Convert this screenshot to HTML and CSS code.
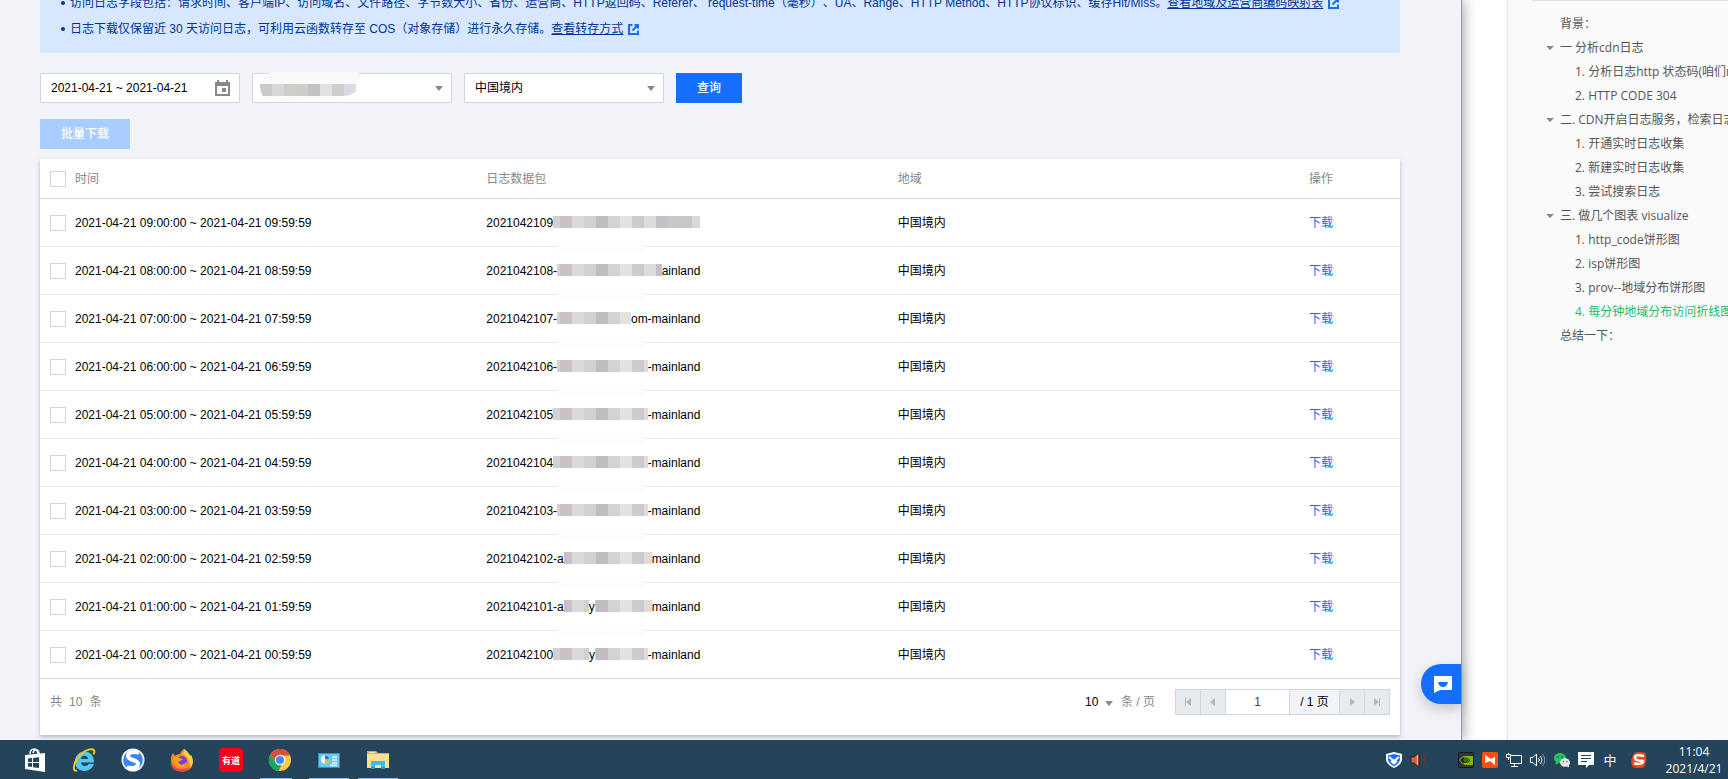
FILE: index.html
```
<!DOCTYPE html>
<html lang="zh-CN">
<head>
    <meta charset="UTF-8">
    <meta name="viewport" content="width=device-width, initial-scale=1.0">
    <title>日志下载</title>
    <link rel="stylesheet" href="styles.css">
</head>
<body>
    <div class="desktop">
        <main class="console">
            <div class="notice">
                <ul>
                    <li>访问日志字段包括：请求时间、客户端IP、访问域名、文件路径、字节数大小、省份、运营商、HTTP返回码、Referer、 request-time（毫秒）、UA、Range、HTTP Method、HTTP协议标识、缓存Hit/Miss。<a href="#">查看地域及运营商编码映射表</a><svg class="ext" viewBox="0 0 11 11"><path d="M4.5 1H1v9h9V6.500M6.500 1H10v3.500M10 1L4.500 6.500"/></svg></li>
                    <li>日志下载仅保留近 30 天访问日志，可利用云函数转存至 COS（对象存储）进行永久存储。<a href="#">查看转存方式</a><svg class="ext" viewBox="0 0 11 11"><path d="M4.5 1H1v9h9V6.500M6.500 1H10v3.500M10 1L4.500 6.500"/></svg></li>
                </ul>
            </div>

            <form class="filters">
                <div class="field date">
                    <input type="text" value="2021-04-21 ~ 2021-04-21" aria-label="日期">
                    <svg viewBox="0 0 15 16"><path fill-rule="evenodd" d="M2 0h2v2h7V0h2v2h2v14H0V2h2zM2 6v8h11V6zM7 8h4v4H7z"/></svg>
                </div>
                <div class="field select">
                    <select aria-label="域名"><option></option></select>
                    <!-- masked domain -->
                    <svg class="mask" viewBox="0 0 100 30">
                        <path fill="#fafafb" d="M9 1Q14 0 20 0H98Q100 4 99 13H1Q3 5 9 1zM1 22H98Q90 25 60 26Q42 28 32 29Q8 32 1 22z"/>
                        <path fill="#ccc9c7" d="M0 12h12v12H3Q0 20 0 12z"/>
                        <path fill="#d7d7d9" d="M12 12h12v12H12z"/>
                        <path fill="#d0cdc9" d="M24 12h12v12H24z"/>
                        <path fill="#cccdcb" d="M36 12h12v12H36z"/>
                        <path fill="#c3c2c3" d="M48 12h12v12H48z"/>
                        <path fill="#e3e2e3" d="M60 12h12v12H60z"/>
                        <path fill="#d0cdcf" d="M72 12h12v12H72z"/>
                        <path fill="#d8dce2" d="M84 12h12v8Q91 23 84 24z"/>
                    </svg>
                </div>
                <div class="field select">
                    <select aria-label="地域"><option>中国境内</option></select>
                </div>
                <button type="button" class="btn">查询</button>
            </form>

            <button type="button" class="btn btn-disabled" disabled>批量下载</button>

            <section class="card">
                <table class="logs">
                    <thead>
                        <tr>
                            <th class="check"><input type="checkbox" aria-label="全选"></th>
                            <th>时间</th>
                            <th>日志数据包</th>
                            <th>地域</th>
                            <th class="action">操作</th>
                        </tr>
                    </thead>
                    <tbody>
                        <tr>
                            <td class="check"><input type="checkbox" aria-label="选择 09"></td>
                            <td>2021-04-21 09:00:00 ~ 2021-04-21 09:59:59</td>
                            <td class="package"><div><span>2021042109</span></div></td>
                            <td>中国境内</td>
                            <td><a href="#">下载</a></td>
                        </tr>
                        <tr>
                            <td class="check"><input type="checkbox" aria-label="选择 08"></td>
                            <td>2021-04-21 08:00:00 ~ 2021-04-21 08:59:59</td>
                            <td class="package"><div><span>2021042108-</span><span class="tail">ainland</span></div></td>
                            <td>中国境内</td>
                            <td><a href="#">下载</a></td>
                        </tr>
                        <tr>
                            <td class="check"><input type="checkbox" aria-label="选择 07"></td>
                            <td>2021-04-21 07:00:00 ~ 2021-04-21 07:59:59</td>
                            <td class="package"><div><span>2021042107-</span><span class="tail">om-mainland</span></div></td>
                            <td>中国境内</td>
                            <td><a href="#">下载</a></td>
                        </tr>
                        <tr>
                            <td class="check"><input type="checkbox" aria-label="选择 06"></td>
                            <td>2021-04-21 06:00:00 ~ 2021-04-21 06:59:59</td>
                            <td class="package"><div><span>2021042106-</span><span class="tail">-mainland</span></div></td>
                            <td>中国境内</td>
                            <td><a href="#">下载</a></td>
                        </tr>
                        <tr>
                            <td class="check"><input type="checkbox" aria-label="选择 05"></td>
                            <td>2021-04-21 05:00:00 ~ 2021-04-21 05:59:59</td>
                            <td class="package"><div><span>2021042105</span><span class="tail">-mainland</span></div></td>
                            <td>中国境内</td>
                            <td><a href="#">下载</a></td>
                        </tr>
                        <tr>
                            <td class="check"><input type="checkbox" aria-label="选择 04"></td>
                            <td>2021-04-21 04:00:00 ~ 2021-04-21 04:59:59</td>
                            <td class="package"><div><span>2021042104</span><span class="tail">-mainland</span></div></td>
                            <td>中国境内</td>
                            <td><a href="#">下载</a></td>
                        </tr>
                        <tr>
                            <td class="check"><input type="checkbox" aria-label="选择 03"></td>
                            <td>2021-04-21 03:00:00 ~ 2021-04-21 03:59:59</td>
                            <td class="package"><div><span>2021042103-</span><span class="tail">-mainland</span></div></td>
                            <td>中国境内</td>
                            <td><a href="#">下载</a></td>
                        </tr>
                        <tr>
                            <td class="check"><input type="checkbox" aria-label="选择 02"></td>
                            <td>2021-04-21 02:00:00 ~ 2021-04-21 02:59:59</td>
                            <td class="package"><div><span>2021042102-a</span><span class="tail">mainland</span></div></td>
                            <td>中国境内</td>
                            <td><a href="#">下载</a></td>
                        </tr>
                        <tr>
                            <td class="check"><input type="checkbox" aria-label="选择 01"></td>
                            <td>2021-04-21 01:00:00 ~ 2021-04-21 01:59:59</td>
                            <td class="package"><div><span>2021042101-a</span><span class="letter">y</span><span class="tail">mainland</span></div></td>
                            <td>中国境内</td>
                            <td><a href="#">下载</a></td>
                        </tr>
                        <tr>
                            <td class="check"><input type="checkbox" aria-label="选择 00"></td>
                            <td>2021-04-21 00:00:00 ~ 2021-04-21 00:59:59</td>
                            <td class="package"><div><span>2021042100</span><span class="letter far">y</span><span class="tail">-mainland</span></div></td>
                            <td>中国境内</td>
                            <td><a href="#">下载</a></td>
                        </tr>
                    </tbody>
                </table>
                <footer class="card-footer">
                    <div class="total"><span>共</span><span>10</span><span>条</span></div>
                    <div class="page-size">
                        <div class="size-select"><select aria-label="每页条数"><option>10</option></select></div>
                        <span>条 / 页</span>
                    </div>
                    <div class="pager">
                        <button type="button" aria-label="首页"><svg viewBox="0 0 8 8"><path d="M1 0h1v8H1zM7 0v8L2 4z"/></svg></button>
                        <button type="button" aria-label="上一页"><svg viewBox="0 0 8 8"><path d="M6 0v8L1 4z"/></svg></button>
                        <input type="text" value="1" aria-label="页码">
                        <span>/ 1 页</span>
                        <button type="button" aria-label="下一页"><svg viewBox="0 0 8 8"><path d="M2 0v8l5-4z"/></svg></button>
                        <button type="button" aria-label="末页"><svg viewBox="0 0 8 8"><path d="M6 0h1v8H6zM1 0v8l5-4z"/></svg></button>
                    </div>
                </footer>
            </section>

            <button type="button" class="chat" aria-label="在线咨询">
                <svg viewBox="0 0 18 17"><path fill="#fff" d="M0 0h18v14H6l-6 3z"/><path fill="#146eff" d="M4 6h10q-1 5-5 5T4 6z"/></svg>
            </button>
        </main>

        <aside class="outline">
            <nav>
                <ul>
                    <li><a href="#">背景：</a></li>
                    <li class="open"><a href="#">一 分析cdn日志</a></li>
                    <li class="sub"><a href="#">1. 分析日志http 状态码(咱们nginx)</a></li>
                    <li class="sub"><a href="#">2. HTTP CODE 304</a></li>
                    <li class="open"><a href="#">二. CDN开启日志服务，检索日志</a></li>
                    <li class="sub"><a href="#">1. 开通实时日志收集</a></li>
                    <li class="sub"><a href="#">2. 新建实时日志收集</a></li>
                    <li class="sub"><a href="#">3. 尝试搜索日志</a></li>
                    <li class="open"><a href="#">三. 做几个图表 visualize</a></li>
                    <li class="sub"><a href="#">1. http_code饼形图</a></li>
                    <li class="sub"><a href="#">2. isp饼形图</a></li>
                    <li class="sub"><a href="#">3. prov--地域分布饼形图</a></li>
                    <li class="sub active"><a href="#">4. 每分钟地域分布访问折线图</a></li>
                    <li><a href="#">总结一下：</a></li>
                </ul>
            </nav>
        </aside>
    </div>

    <div class="taskbar">
        <div class="apps">
            <button type="button" aria-label="应用商店">
                <svg viewBox="0 0 24 24"><path fill="none" stroke="#fff" stroke-width="1.500" d="M7 6c0-6 7-7 8 0M10 5c1-5 6-4 6 1"/><path fill="#fff" d="M2 7l20-2v19L2 21z"/><path fill="#24445c" d="M5 10.500l4-.5v4H5zM10 10l6-.7V14h-6zM5 15h4v4l-4-.5zM10 15h6v5l-6-.8z"/></svg>
            </button>
            <button type="button" aria-label="Internet Explorer">
                <svg viewBox="0 0 24 24"><path fill="#52c8f2" d="M12.500 3.500C18.500 3.500 22 8 22 14.500H9c.3 2.500 2 3.500 4 3.500 1.700 0 3-.7 3.600-2H22c-1.400 4-4.600 7-9.500 7C6.500 23 3 19 3 13.500s4-10 9.500-10zM9 11h7c-.2-2-1.500-3.200-3.500-3.200S9.400 9 9 11z"/><path fill="none" stroke="#f6c620" stroke-width="2" d="M5 22.500c-4 1-4-4-1-10C7.500 5.500 16 0 21 1.500c2 .8 1.500 3 .5 5"/></svg>
            </button>
            <button type="button" aria-label="搜狗浏览器">
                <svg viewBox="0 0 24 24"><circle cx="12" cy="12" r="11.500" fill="#f4f8fc"/><circle cx="12" cy="12" r="9.800" fill="#3b87e8"/><path fill="none" stroke="#fff" stroke-width="4" d="M18 5C13 3 7 4 7 8c0 5 10 3 10 8 0 4-6 5-11 3"/></svg>
            </button>
            <button type="button" aria-label="Firefox">
                <svg viewBox="0 0 24 24"><path fill="#ff8a1f" d="M14 1c3 2 5 4 6 7l1-1c4 8 1 16-8 16.500C5 24 0 19 1 12c0-4 1-5 2-7l2 3c1-1 3-2 5-2 1-2 2-4 4-5z"/><path fill="#ffd23c" d="M14 1c3 2 5 4 6 7l1-1c3 6 2 10-1 13 0-7-2-11-7-14z"/><path fill="#ff3d58" d="M1 13c2 5 5 8 11 8 4 0 7-1 8-4-1 5-5 7-8 6.500C5 23 1 19 1 13z"/><circle cx="12" cy="13" r="5" fill="#7b3fd6"/><path fill="#ff9d22" d="M4 9c3-1 4 1 9 2-2 1-2 2-5 3 2 4 6 3 8 0 0 4-3 6-6 5-4-1-6-5-6-10z"/></svg>
            </button>
            <button type="button" aria-label="有道词典">
                <svg viewBox="0 0 24 24"><rect width="24" height="24" rx="4" fill="#fa0019"/><text class="youdao" x="12" y="16" text-anchor="middle">有道</text></svg>
            </button>
            <button type="button" class="running multi" aria-label="Chrome">
                <svg viewBox="0 0 24 24"><circle cx="12" cy="12" r="11" fill="#ffcd41"/><path fill="#dd4b3e" d="M2.500 6.500C7-1 18-1 22 7.500H12L7.500 14z"/><path fill="#1da362" d="M2.500 6.500L8 14.500l6 1.500-3.500 7C3 22-2 14 2.500 6.500z"/><circle cx="12" cy="12" r="5.200" fill="#fff"/><circle cx="12" cy="12" r="4.100" fill="#4587f3"/></svg>
            </button>
            <button type="button" class="running" aria-label="控制面板">
                <svg viewBox="0 0 24 24"><path fill="#2e92c8" d="M1 5h22v15H1z"/><path fill="#67c9f4" d="M2 6h20v13H2z"/><circle cx="8" cy="11.500" r="4" fill="#f3fbff"/><path fill="#2679b8" d="M8 11.500v-4a4 4 0 0 1 4 4z"/><path fill="#efb13c" d="M8 11.500h4a4 4 0 0 1-4 4zM4 17h7v1H4z"/><path fill="none" stroke="#e9f8ff" stroke-width="1.500" d="M15 9h5M15 12h5M15 15h5M13 17.500h7"/></svg>
            </button>
            <button type="button" class="running" aria-label="文件资源管理器">
                <svg viewBox="0 0 24 24"><path fill="#e2ae43" d="M1 3h9l2 2h11v15H1z"/><path fill="#fbe18d" d="M1 6h22v14H1z"/><path fill="#fff3c0" d="M3 4h6v1H3z"/><path fill="#38bdf0" d="M5 13h14v8h-4v-4H9v4H5z"/><path fill="#1a93cf" d="M5 19h4v2H5zM15 19h4v2h-4z"/></svg>
            </button>
        </div>
        <div class="tray">
            <div class="tray-group">
                <svg viewBox="0 0 16 16"><path fill="#fff" d="M8 0l8 2v6q-1 5-8 8Q1 13 0 8V2z"/><path fill="#1a6dff" d="M8 2l6 1.500V8q-1 4-6 6.500Q3 12 2 8V3.500z"/><path fill="none" stroke="#fff" stroke-width="2" d="M3 5l5 4 5-4M5 9l3 2.500L11 9"/></svg>
                <svg viewBox="0 0 16 16"><path fill="#d9623f" stroke="#221815" stroke-width=".8" d="M1 5h3l5-4v14l-5-4H1z"/><path fill="#f5cdbb" d="M7 4l1-1v10l-1-1z"/><path fill="none" stroke="#733529" stroke-width="1.200" d="M11 5q2 3 0 6M13.500 3q3 5 0 10"/></svg>
            </div>
            <div class="tray-group">
                <svg viewBox="0 0 16 16"><rect x=".5" y=".5" width="15" height="15" rx="1" fill="#30353d" stroke="#17191d"/><path fill="#76b900" d="M6 4h9v9H6z"/><path fill="none" stroke="#76b900" d="M1.500 8Q5 3 8 5M1.500 8Q4 13 8 12"/><path fill="none" stroke="#23301b" d="M3 8.500q4-5 9 0-5 4-9 0zM5 8.500q3-2 5 0-3 2-5 0z"/></svg>
                <svg viewBox="0 0 16 16"><rect width="16" height="16" rx="2" fill="#f8500f"/><path fill="#fff" d="M3 3l6 4 4-2v8L8 9l-5 2z"/></svg>
                <svg viewBox="0 0 16 16"><path fill="none" stroke="#fff" d="M5 3.500h10.500v8H4.500V6M8.500 12v2.500M5 14.500h7M.5 2.500h4v3h-4zM2.500 1v1M2.500 6v2"/></svg>
                <svg viewBox="0 0 16 16"><path fill="none" stroke="#fff" d="M.5 5.500H3L6.500 2v12L3 10.500H.5zM8.500 6q1.500 2 0 4M10.500 4q3 4 0 8"/><path fill="none" stroke="#8ba0af" d="M12.500 2q4.500 6 0 12"/></svg>
                <svg viewBox="0 0 16 16"><ellipse cx="6" cy="6" rx="6" ry="5" fill="#26c45f"/><path fill="#26c45f" d="M2 9l-.5 4L5 11z"/><circle cx="4" cy="5" r=".8" fill="#164a2b"/><circle cx="8" cy="5" r=".8" fill="#164a2b"/><ellipse cx="11" cy="10.500" rx="5" ry="4.300" fill="#e4e8e9"/><path fill="#e4e8e9" d="M12 14l3 1.500V12z"/><circle cx="9.500" cy="9.500" r=".7" fill="#555"/><circle cx="13" cy="9.500" r=".7" fill="#555"/></svg>
                <svg viewBox="0 0 16 16"><path fill="#fff" d="M0 0h16v13h-5l-3 3v-3H0z"/><path fill="none" stroke="#24445c" d="M3 3.500h10M3 6.500h10M3 9.500h6"/></svg>
                <span class="ime">中</span>
            </div>
            <svg viewBox="0 0 16 16"><path fill="#f2461c" d="M3 1q6-2 11 0 2 4 1 9l-2 5q-6 2-11 0-3-5-1-9z"/><path fill="none" stroke="#fff" stroke-width="2.500" d="M13 4Q4 2 4 5.500T12 9q0 4-9 2.500"/></svg>
            <div class="clock"><span>11:04</span><span>2021/4/21</span></div>
        </div>
    </div>
</body>
</html>
```

FILE: styles.css
```
* {
    box-sizing: border-box;
}
body {
    margin: 0;
    height: 100vh;
    display: flex;
    flex-direction: column;
    overflow: hidden;
    background: #fff;
    color: #000;
    font: 12px/18px "Liberation Sans", "Noto Sans CJK SC", sans-serif;
}
ul {
    list-style: none;
    margin: 0;
    padding: 0;
}
button, input, select {
    font: inherit;
    color: inherit;
    margin: 0;
    border-radius: 0;
}
button {
    border: 0;
    padding: 0;
    cursor: pointer;
}
select {
    appearance: none;
}
svg {
    display: block;
    flex: none;
}

/* windows */
.desktop {
    flex: 1;
    min-height: 0;
    display: flex;
    gap: 45px;
}
.console {
    position: relative;
    z-index: 1;
    flex: 1;
    min-width: 0;
    padding: 0 61px 0 40px;
    background: #f2f3f8;
    border-right: 1px solid #999;
    box-shadow: 2px 0 12px rgba(0,0,0,0.35);
}

/* notice */
.notice {
    height: 53px;
    padding: 0 20px 15px;
    display: flex;
    flex-direction: column;
    justify-content: flex-end;
    overflow: hidden;
    background: #d6e7ff;
    color: #003399;
    text-spacing-trim: space-all;
}
.notice ul {
    display: flex;
    flex-direction: column;
    gap: 8px;
}
.notice li {
    position: relative;
    padding-left: 10px;
    white-space: nowrap;
}
.notice li::before {
    content: "";
    position: absolute;
    left: 1px;
    top: 7px;
    width: 4px;
    height: 4px;
    border-radius: 50%;
    background: #003399;
}
.notice a {
    color: #003399;
    text-decoration: underline;
}
.ext {
    display: inline-block;
    width: 11px;
    height: 11px;
    margin-left: 5px;
    vertical-align: -2px;
    fill: none;
    stroke: #146eff;
    stroke-width: 2;
}

/* filters */
.filters {
    display: flex;
    gap: 12px;
    margin: 20px 0 16px;
}
.field {
    position: relative;
    width: 200px;
    height: 30px;
}
.field input, .field select {
    width: 100%;
    height: 100%;
    padding: 0 10px;
    background: #fff;
    border: 1px solid #cfd5de;
}
.field.date svg {
    position: absolute;
    right: 10px;
    top: 7px;
    width: 15px;
    height: 16px;
    fill: #888;
}
.field.select::after, .size-select::after {
    content: "";
    position: absolute;
    right: 9px;
    top: 13px;
    border: 4px solid transparent;
    border-top: 5px solid #888;
    border-bottom: 0;
}
.field .mask {
    position: absolute;
    left: 8px;
    top: -1px;
    width: 100px;
    height: 30px;
}
.btn {
    height: 30px;
    padding: 0 21px;
    background: #146eff;
    color: #fff;
    font-weight: 500;
}
.btn:hover {
    background: #0057e0;
}
.btn-disabled, .btn-disabled:hover {
    display: block;
    background: #a8cdff;
    cursor: default;
}

/* table */
.card {
    margin-top: 10px;
    background: #fff;
    box-shadow: 0 2px 4px rgba(54,58,80,0.32);
}
.logs {
    width: 100%;
    table-layout: fixed;
    border-collapse: separate;
    border-spacing: 0;
}
.logs th, .logs td {
    height: 48px;
    padding: 0;
    text-align: left;
    border-bottom: 1px solid #e5e8ed;
}
.logs th {
    height: 40px;
    color: #888;
    font-weight: normal;
    border-color: #cfd5de;
}
.logs tr:last-child td {
    border-color: #cfd5de;
}
.logs .check {
    width: 35px;
    padding-left: 10px;
}
.logs .action {
    width: 91px;
}
.logs input {
    display: block;
    appearance: none;
    width: 16px;
    height: 16px;
    background: #fff;
    border: 1px solid #cfd5de;
}
.logs a {
    color: #146eff;
    text-decoration: none;
}
/* masked part of the package name shows through between the text spans */
.package {
    position: relative;
}
.package div {
    display: flex;
    width: 214px;
    background: linear-gradient(90deg,
        #d0d2d3 74px, #c8c2c8 74px 86px, #dad8db 86px 98px, #ced2d3 98px 110px,
        #c2bbc2 110px 122px, #d3d3d1 122px 134px, #e3e2dd 134px 146px,
        #c9cbcd 146px 158px, #dedbd8 158px 170px, #c4c0c8 170px 182px,
        #c9c6c7 182px 206px, #d5d9dc 206px) no-repeat 0 2px / 100% 12px;
}
.package span {
    background: #fff;
}
.package .tail {
    margin-left: auto;
}
.package .letter {
    margin-left: 25px;
}
.package .letter.far {
    margin-left: 36px;
}
.package::after {
    content: "";
    position: absolute;
    left: 72px;
    bottom: -7px;
    width: 86px;
    height: 12px;
    background: #fdfdfd;
}
.logs tr:last-child .package::after {
    display: none;
}

/* table footer */
.card-footer {
    display: flex;
    align-items: center;
    padding: 10px 10px 20px;
    color: #888;
}
.total {
    flex: 1;
    display: flex;
    gap: 7px;
}
.page-size {
    display: flex;
    gap: 8px;
    margin-right: 20px;
}
.size-select {
    position: relative;
}
.size-select select {
    width: 28px;
    padding: 0;
    border: 0;
    background: none;
    color: #000;
}
.size-select::after {
    right: 0;
    top: 8px;
}
.pager {
    display: flex;
    height: 26px;
    border: 1px solid #cfd5de;
}
.pager > * + * {
    border: 0;
    border-left: 1px solid #cfd5de;
}
.pager button {
    display: flex;
    align-items: center;
    justify-content: center;
    width: 25px;
    background: #e7eaef;
}
.pager button:first-child {
    width: 24px;
}
.pager svg {
    width: 8px;
    height: 8px;
    fill: #b4b7bd;
}
.pager input {
    width: 64px;
    padding: 0;
    text-align: center;
    background: #fff;
    color: #444;
}
.pager span {
    width: 50px;
    line-height: 24px;
    text-align: center;
    background: #f2f3f8;
    color: #000;
}

.chat {
    position: absolute;
    right: 0;
    bottom: 36px;
    width: 40px;
    height: 40px;
    padding-left: 13px;
    border-radius: 20px 0 0 20px;
    background: #146eff;
    box-shadow: 0 5px 12px rgba(54,58,80,0.25);
}
.chat svg {
    width: 18px;
    height: 17px;
}

/* article outline */
.outline {
    width: 221px;
    padding-left: 24px;
    overflow: hidden;
    background: #fafafa;
    border-left: 1px solid #e5e5e5;
    font-family: "Open Sans", "Noto Sans CJK SC", sans-serif;
}
.outline nav {
    padding: 11px 0 0 28px;
    border-top: 1px solid #e2e2e2;
}
.outline li {
    position: relative;
    line-height: 24px;
    white-space: nowrap;
}
.outline .sub {
    padding-left: 15px;
}
.outline .open::before {
    content: "";
    position: absolute;
    left: -14px;
    top: 10px;
    border: 4px solid transparent;
    border-top-color: #888;
    border-bottom: 0;
}
.outline a {
    color: #555;
    text-decoration: none;
}
.outline .active a {
    color: #25bb68;
}

/* taskbar */
.taskbar {
    position: relative;
    z-index: 2;
    height: 39px;
    padding: 0 5px 0 15px;
    display: flex;
    justify-content: space-between;
    background: #24445c;
    color: #fff;
    font-family: "Open Sans", "Noto Sans CJK SC", sans-serif;
}
.apps {
    display: flex;
    gap: 9px;
}
.apps button {
    display: flex;
    align-items: center;
    justify-content: center;
    width: 40px;
    background: none;
}
.apps .running {
    box-shadow: inset 0 -1px #85bdeb;
}
.apps .multi {
    border-right: 8px solid transparent;
    padding-left: 8px;
}
.apps svg {
    width: 24px;
    height: 24px;
}
.youdao {
    fill: #fff;
    font: bold 9px "Noto Sans CJK SC", sans-serif;
}
.tray {
    display: flex;
    align-items: center;
}
.tray svg {
    width: 16px;
    height: 16px;
}
.tray-group {
    display: flex;
    align-items: center;
    gap: 8px;
    margin-right: 32px;
}
.tray-group + .tray-group {
    margin-right: 13px;
}
.ime {
    width: 16px;
    font-size: 13px;
    text-align: center;
}
.clock {
    display: flex;
    flex-direction: column;
    align-items: center;
    width: 58px;
    margin-left: 18px;
    line-height: 17px;
}
```
